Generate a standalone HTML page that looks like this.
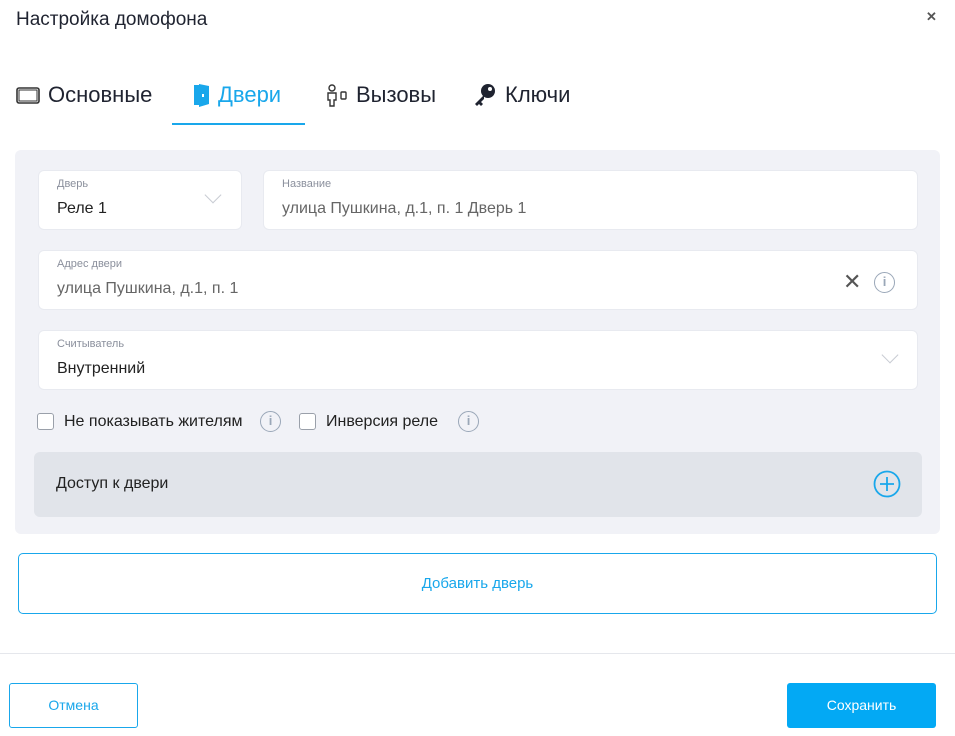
<!DOCTYPE html>
<html><head><meta charset="utf-8"><style>
*{box-sizing:border-box;margin:0;padding:0}
body{width:955px;height:736px;background:#fff;font-family:"Liberation Sans",sans-serif;color:#222;position:relative;overflow:hidden}
.abs{position:absolute}
.title{left:16px;top:9px;font-size:19px;color:#1f2330}
.close{left:926px;top:9px;font-size:13px;color:#555;font-weight:bold}
.tab{top:82px;font-size:22px;color:#1f2330;display:flex;align-items:center;gap:8px}
.panel{left:15px;top:150px;width:925px;height:384px;background:#f1f2f7;border-radius:6px}
.field{background:#fff;border-radius:6px;border:1px solid #e8eaf0}
.lbl{position:absolute;left:18px;top:7px;font-size:11px;color:#8a8f9c}
.val{position:absolute;left:18px;top:29px;font-size:16px;color:#222}
.chev{position:absolute;width:12px;height:12px;border-right:1.5px solid #c8ccd3;border-bottom:1.5px solid #c8ccd3;transform:rotate(45deg)}
.info{width:21px;height:21px;border:1.5px solid #9aa7b8;border-radius:50%;color:#9aa7b8;font-size:13px;text-align:center;line-height:18px;font-weight:bold}
.cb{width:17px;height:17px;border:1.5px solid #9aa0aa;border-radius:3px;background:#fff}
</style></head><body>
<div class="abs title">Настройка домофона</div>
<div class="abs close">✕</div>

<div class="abs tab" style="left:16px"><svg width="24" height="18"><rect x="1" y="2" width="22" height="15" rx="2" fill="none" stroke="#333" stroke-width="1.6"/><rect x="3" y="4" width="18" height="11" fill="none" stroke="#333" stroke-width="1"/></svg>Основные</div>
<div class="abs tab" style="left:192px;color:#19a7eb"><svg width="18" height="24"><path d="M2 2h5v20H2z" fill="#19a7eb"/><path d="M7 1l10 2v18l-10 3z" fill="#19a7eb"/><rect x="10" y="11" width="2" height="3" fill="#fff"/></svg>Двери</div>
<div class="abs" style="left:172px;top:123px;width:133px;height:2px;background:#19a7eb"></div>
<div class="abs tab" style="left:324px"><svg width="24" height="24"><circle cx="8" cy="5" r="3" fill="none" stroke="#333" stroke-width="1.4"/><path d="M4 10h8v7h-2v6h-4v-6H4z" fill="none" stroke="#333" stroke-width="1.4"/><rect x="17" y="9" width="5" height="7" rx="1" fill="none" stroke="#333" stroke-width="1.4"/></svg>Вызовы</div>
<div class="abs tab" style="left:473px"><svg width="24" height="24"><circle cx="15" cy="8" r="7" fill="#1f2330"/><path d="M11 12L2 21l2 2 2-2 2 2 2-2-2-2 3-3z" fill="#1f2330"/><circle cx="17" cy="6" r="2" fill="#fff"/></svg>Ключи</div>

<div class="abs panel"></div>
<div class="abs field" style="left:38px;top:170px;width:204px;height:60px"><div class="lbl">Дверь</div><div class="val">Реле 1</div><div class="chev" style="left:168px;top:18px"></div></div>
<div class="abs field" style="left:263px;top:170px;width:655px;height:60px"><div class="lbl">Название</div><div class="val" style="color:#666">улица Пушкина, д.1, п. 1 Дверь 1</div></div>
<div class="abs field" style="left:38px;top:250px;width:880px;height:60px"><div class="lbl">Адрес двери</div><div class="val" style="color:#666">улица Пушкина, д.1, п. 1</div>
<div class="abs" style="left:804px;top:18px;font-size:22px;color:#555">✕</div><div class="abs info" style="left:835px;top:21px">i</div></div>
<div class="abs field" style="left:38px;top:330px;width:880px;height:60px"><div class="lbl">Считыватель</div><div class="val">Внутренний</div><div class="chev" style="left:845px;top:18px"></div></div>

<div class="abs cb" style="left:37px;top:413px"></div>
<div class="abs" style="left:64px;top:413px;font-size:16px">Не показывать жителям</div>
<div class="abs info" style="left:260px;top:411px">i</div>
<div class="abs cb" style="left:299px;top:413px"></div>
<div class="abs" style="left:326px;top:413px;font-size:16px">Инверсия реле</div>
<div class="abs info" style="left:458px;top:411px">i</div>

<div class="abs" style="left:34px;top:452px;width:888px;height:65px;background:#e1e4ea;border-radius:6px"></div>
<div class="abs" style="left:56px;top:475px;font-size:16px">Доступ к двери</div>
<svg class="abs" style="left:873px;top:470px" width="28" height="28"><circle cx="14" cy="14" r="12.5" fill="none" stroke="#19a7eb" stroke-width="1.8"/><path d="M14 7v14M7 14h14" stroke="#19a7eb" stroke-width="1.8"/></svg>

<div class="abs" style="left:18px;top:553px;width:919px;height:61px;border:1px solid #19a7eb;border-radius:5px;color:#19a7eb;font-size:15px;text-align:center;line-height:59px">Добавить дверь</div>

<div class="abs" style="left:0;top:653px;width:955px;height:1px;background:#e5e7ec"></div>
<div class="abs" style="left:9px;top:683px;width:129px;height:45px;border:1px solid #19a7eb;border-radius:3px;color:#19a7eb;font-size:14px;text-align:center;line-height:43px">Отмена</div>
<div class="abs" style="left:787px;top:683px;width:149px;height:45px;background:#03a9f4;border-radius:3px;color:#fff;font-size:14px;text-align:center;line-height:45px">Сохранить</div>
</body></html>
